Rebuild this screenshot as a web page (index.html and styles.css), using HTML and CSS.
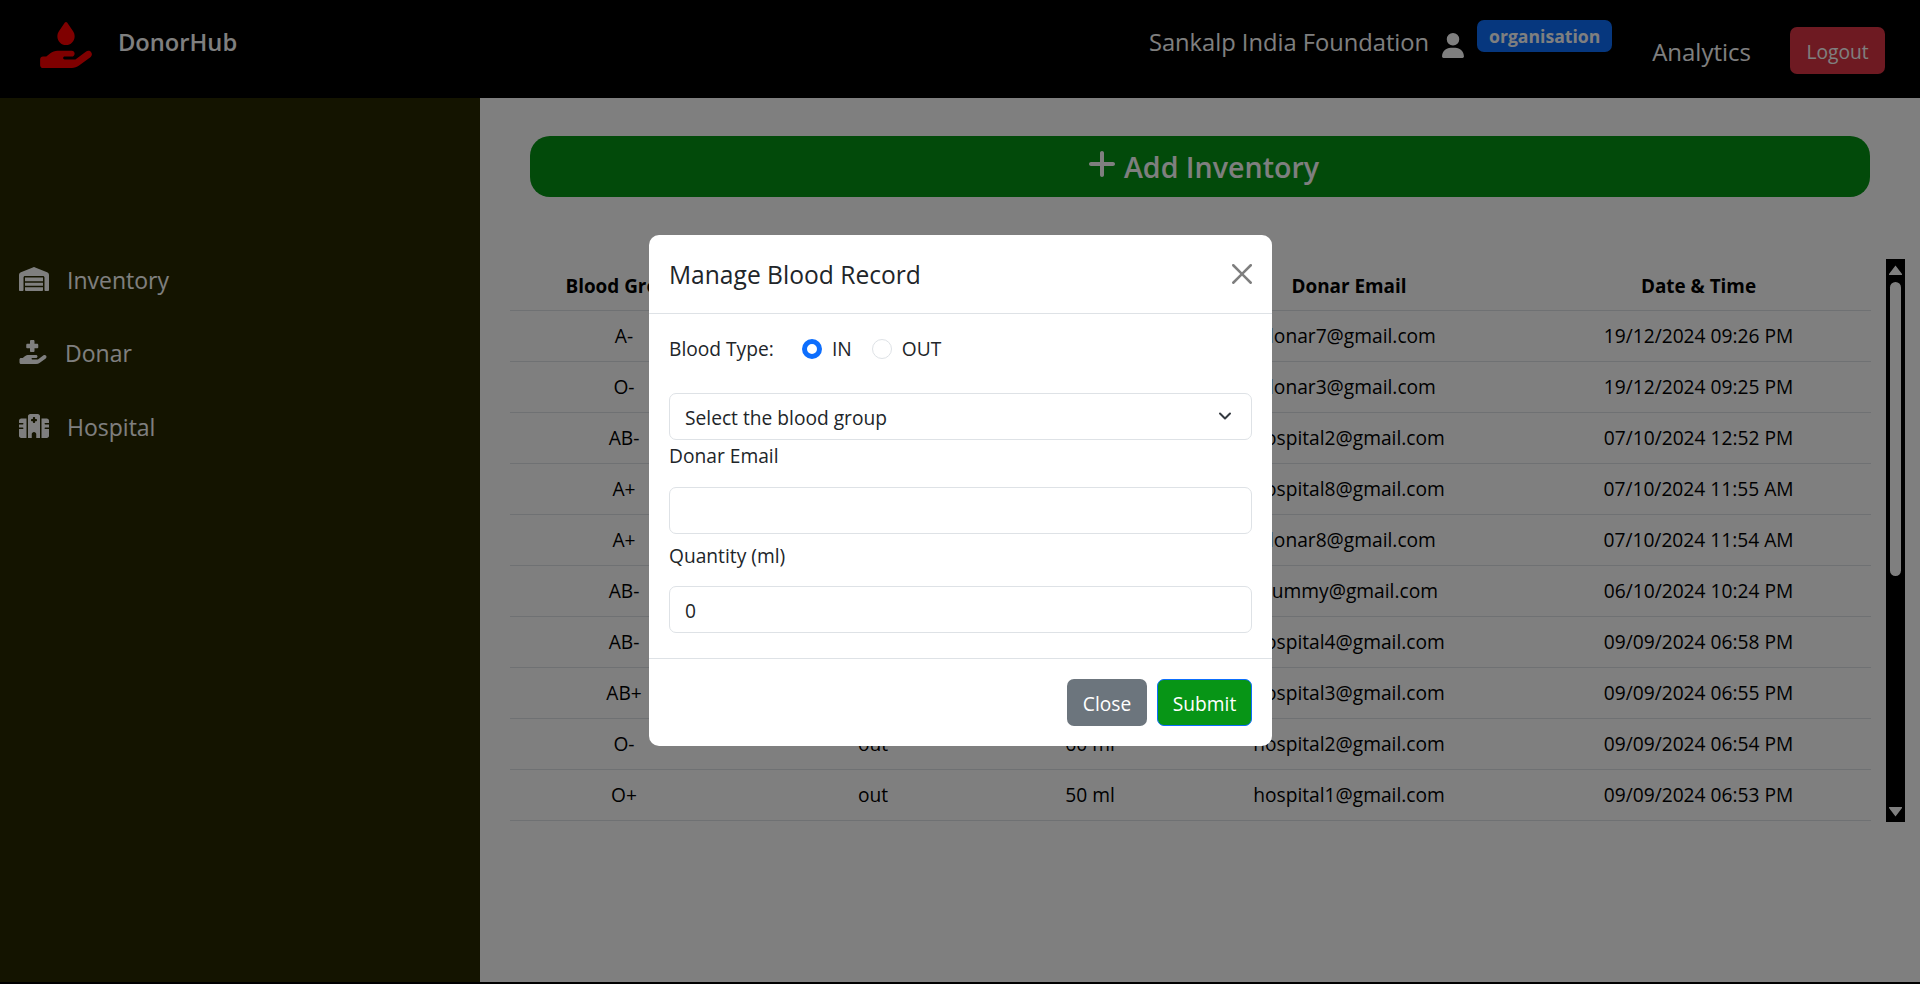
FILE: index.html
```html
<!DOCTYPE html>
<html lang="en">
<head>
  <meta charset="UTF-8" />
  <meta name="viewport" content="width=device-width, initial-scale=1.0"/>
  <title>DonorHub</title>
  <link rel="stylesheet" href="styles.css">
</head>
<body>

  <header class="navbar">
    <div class="brand">
      <svg class="brand-icon" viewBox="0 0 576 512"><path d="M275.5 6.6C278.3 2.5 283 0 288 0s9.7 2.5 12.5 6.6L366.8 103C378 119.3 384 138.6 384 158.3V160c0 53-43 96-96 96s-96-43-96-96v-1.7c0-19.8 6-39 17.2-55.3L275.5 6.6zM568.2 336.3c13.1 17.8 9.3 42.8-8.5 55.9L433.1 485.5c-23.4 17.2-51.6 26.5-80.7 26.5H192 32c-17.7 0-32-14.3-32-32V416c0-17.7 14.3-32 32-32H68.8l44.9-36c22.7-18.2 50.9-28 80-28H272h16 64c17.7 0 32 14.3 32 32s-14.3 32-32 32H288 272c-8.8 0-16 7.2-16 16s7.2 16 16 16H392.6l119.7-88.2c17.8-13.1 42.8-9.3 55.9 8.5z"/></svg>
      <span class="brand-name">DonorHub</span>
    </div>
    <div class="nav-right">
      <span class="org-name">Sankalp India Foundation</span>
      <svg class="user-icon" viewBox="0 0 448 512"><path d="M224 256A128 128 0 1 0 224 0a128 128 0 1 0 0 256zm-45.7 48C79.8 304 0 383.8 0 482.3C0 498.7 13.3 512 29.7 512H418.3c16.4 0 29.7-13.3 29.7-29.7C448 383.8 368.2 304 269.7 304H178.3z"/></svg>
      <span class="badge">organisation</span>
      <a class="nav-link" href="#analytics">Analytics</a>
      <button class="btn btn-logout" type="button">Logout</button>
    </div>
  </header>

  <div class="layout">
    <aside class="sidebar">
      <a class="side-link" href="#inventory">
        <svg class="side-icon" viewBox="0 0 640 512"><path d="M0 488V171.3c0-26.2 15.9-49.7 40.2-59.4L308.1 4.8c7.6-3.1 16.1-3.1 23.8 0L599.8 111.9c24.3 9.7 40.2 33.3 40.2 59.4V488c0 13.3-10.7 24-24 24H568c-13.3 0-24-10.7-24-24V224c0-17.7-14.3-32-32-32H128c-17.7 0-32 14.3-32 32V488c0 13.3-10.7 24-24 24H24c-13.3 0-24-10.7-24-24zm488 24l-336 0c-13.3 0-24-10.7-24-24V432H512l0 56c0 13.3-10.7 24-24 24zM128 400V336H512v64H128zm0-96V224H512l0 80H128z"/></svg>
        Inventory
      </a>
      <a class="side-link" href="#donar">
        <svg class="side-icon" viewBox="0 0 576 512"><path d="M224 24V80H168c-13.3 0-24 10.7-24 24v48c0 13.3 10.7 24 24 24h56v56c0 13.3 10.7 24 24 24h48c13.3 0 24-10.7 24-24V176h56c13.3 0 24-10.7 24-24V104c0-13.3-10.7-24-24-24H320V24c0-13.3-10.7-24-24-24H248c-13.3 0-24 10.7-24 24zM559.7 392.2c17.8-13.1 21.6-38.1 8.5-55.9s-38.1-21.6-55.9-8.5L392.6 416H272c-8.8 0-16-7.2-16-16s7.2-16 16-16h16 64c17.7 0 32-14.3 32-32s-14.3-32-32-32H288 272 193.7c-29.1 0-57.3 9.9-80 28L68.8 384H32c-17.7 0-32 14.3-32 32v64c0 17.7 14.3 32 32 32H192 352.5c29 0 57.3-9.3 80.7-26.5l126.6-93.3z"/></svg>
        Donar
      </a>
      <a class="side-link" href="#hospital">
        <svg class="side-icon" viewBox="0 0 640 512"><path d="M192 48c0-26.5 21.5-48 48-48H400c26.5 0 48 21.5 48 48V512H368V432c0-26.5-21.5-48-48-48s-48 21.5-48 48v80H192V48zM48 96H160V512H48c-26.5 0-48-21.5-48-48V320H80c8.8 0 16-7.2 16-16s-7.2-16-16-16H0V224H80c8.8 0 16-7.2 16-16s-7.2-16-16-16H0V144c0-26.5 21.5-48 48-48zm544 0c26.5 0 48 21.5 48 48v48H560c-8.8 0-16 7.2-16 16s7.2 16 16 16h80v64H560c-8.8 0-16 7.2-16 16s7.2 16 16 16h80V464c0 26.5-21.5 48-48 48H480V96H592zM312 64c-8.8 0-16 7.2-16 16v24H272c-8.8 0-16 7.2-16 16v16c0 8.8 7.2 16 16 16h24v24c0 8.8 7.2 16 16 16h16c8.8 0 16-7.2 16-16V152h24c8.8 0 16-7.2 16-16V120c0-8.8-7.2-16-16-16H344V80c0-8.8-7.2-16-16-16H312z"/></svg>
        Hospital
      </a>
    </aside>

    <main class="content">
      <button class="add-btn" type="button">
        <svg class="plus-icon" viewBox="0 0 448 512"><path d="M256 80c0-17.7-14.3-32-32-32s-32 14.3-32 32V224H48c-17.7 0-32 14.3-32 32s14.3 32 32 32H192V432c0 17.7 14.3 32 32 32s32-14.3 32-32V288H400c17.7 0 32-14.3 32-32s-14.3-32-32-32H256V80z"/></svg>
        Add Inventory
      </button>

      <div class="table-area">
        <table class="records">
          <colgroup>
            <col class="col-group"><col class="col-type"><col class="col-qty"><col class="col-email"><col class="col-date">
          </colgroup>
          <thead>
            <tr><th>Blood Group</th><th>Inventory Type</th><th>Quantity</th><th>Donar Email</th><th>Date &amp; Time</th></tr>
          </thead>
          <tbody>
            <tr><td>A-</td><td>in</td><td>100 ml</td><td>donar7@gmail.com</td><td>19/12/2024 09:26 PM</td></tr>
            <tr><td>O-</td><td>in</td><td>200 ml</td><td>donar3@gmail.com</td><td>19/12/2024 09:25 PM</td></tr>
            <tr><td>AB-</td><td>out</td><td>50 ml</td><td>hospital2@gmail.com</td><td>07/10/2024 12:52 PM</td></tr>
            <tr><td>A+</td><td>out</td><td>100 ml</td><td>hospital8@gmail.com</td><td>07/10/2024 11:55 AM</td></tr>
            <tr><td>A+</td><td>in</td><td>300 ml</td><td>donar8@gmail.com</td><td>07/10/2024 11:54 AM</td></tr>
            <tr><td>AB-</td><td>in</td><td>100 ml</td><td>dummy@gmail.com</td><td>06/10/2024 10:24 PM</td></tr>
            <tr><td>AB-</td><td>out</td><td>40 ml</td><td>hospital4@gmail.com</td><td>09/09/2024 06:58 PM</td></tr>
            <tr><td>AB+</td><td>out</td><td>30 ml</td><td>hospital3@gmail.com</td><td>09/09/2024 06:55 PM</td></tr>
            <tr><td>O-</td><td>out</td><td>60 ml</td><td>hospital2@gmail.com</td><td>09/09/2024 06:54 PM</td></tr>
            <tr><td>O+</td><td>out</td><td>50 ml</td><td>hospital1@gmail.com</td><td>09/09/2024 06:53 PM</td></tr>
          </tbody>
        </table>

        <div class="scrollbar">
          <svg class="scroll-arrow" viewBox="0 0 13 10"><path d="M6.5 0.5 13 9a.6.6 0 0 1-.5 1H.5A.6.6 0 0 1 0 9z"/></svg>
          <div class="scroll-thumb"></div>
          <svg class="scroll-arrow" viewBox="0 0 13 10"><path d="M6.5 9.5 13 1a.6.6 0 0 0-.5-1H.5A.6.6 0 0 0 0 1z"/></svg>
        </div>
      </div>
    </main>
  </div>

  <div class="backdrop"></div>

  <div class="modal">
    <div class="modal-content">
      <div class="modal-header">
        <h5 class="modal-title">Manage Blood Record</h5>
        <button class="btn-close" type="button" aria-label="Close">
          <svg viewBox="0 0 16 16"><path d="M.293.293a1 1 0 0 1 1.414 0L8 6.586 14.293.293a1 1 0 1 1 1.414 1.414L9.414 8l6.293 6.293a1 1 0 0 1-1.414 1.414L8 9.414l-6.293 6.293a1 1 0 0 1-1.414-1.414L6.586 8 .293 1.707a1 1 0 0 1 0-1.414z"/></svg>
        </button>
      </div>
      <div class="modal-body">
        <div class="type-row">
          <span class="type-label">Blood Type:</span>
          <label class="radio"><span class="radio-dot checked"></span>IN</label>
          <label class="radio"><span class="radio-dot"></span>OUT</label>
        </div>
        <div class="field select-field">
          Select the blood group
          <svg class="chevron" viewBox="0 0 16 16"><path fill="none" stroke="#343a40" stroke-linecap="round" stroke-linejoin="round" stroke-width="2" d="m3 5.5 5 5 5-5"/></svg>
        </div>
        <div class="field-label">Donar Email</div>
        <div class="field"></div>
        <div class="field-label field-label-next">Quantity (ml)</div>
        <div class="field">0</div>
      </div>
      <div class="modal-footer">
        <button class="btn btn-close-modal" type="button">Close</button>
        <button class="btn btn-submit" type="button">Submit</button>
      </div>
    </div>
  </div>

</body>
</html>
```

FILE: styles.css
```css
* {
  margin: 0;
  padding: 0;
  box-sizing: border-box;
}

html, body {
  height: 100%;
  overflow: hidden;
}

body {
  background: #000;
  color: #212529;
  font-family: 'Open Sans', 'Noto Sans', sans-serif;
  font-size: 19.2px;
  line-height: 1.5;
}

a {
  color: inherit;
  text-decoration: none;
}

button {
  font-family: inherit;
  border: 0;
}

/* top bar */
.navbar {
  height: 98px;
  background: #000;
  color: #fff;
  display: flex;
  justify-content: space-between;
  padding: 0 35px 0 40px;
}

.brand {
  display: flex;
  align-items: center;
  gap: 26px;
  padding-bottom: 12px;
}

.brand-icon {
  width: 52px;
  height: 46px;
  margin-top: 4px;
  fill: #ff0000;
}

.brand-name {
  font-size: 23.7px;
  font-weight: 600;
}

.nav-right {
  display: flex;
  align-items: flex-start;
}

.org-name {
  font-size: 23.7px;
  margin-top: 25px;
}

.user-icon {
  width: 22px;
  height: 25px;
  margin: 33px 13px 0 13px;
  fill: #fff;
}

.badge {
  margin-top: 20px;
  width: 135px;
  height: 32px;
  border-radius: 7px;
  background: #0d6efd;
  font-size: 17.6px;
  font-weight: 700;
  line-height: 32px;
  text-align: center;
}

.nav-link {
  font-size: 24px;
  margin: 34px 39px 0 40px;
}

.btn {
  height: 47px;
  border-radius: 7px;
  color: #fff;
  font-size: 19.2px;
}

.btn-logout {
  width: 95px;
  margin-top: 27px;
  padding-top: 2px;
  background: #dc3545;
}

/* page body */
.layout {
  display: flex;
  height: 884px;
}

.sidebar {
  width: 480px;
  flex-shrink: 0;
  background: #282900;
  color: #fff;
  padding: 145px 0 0 19px;
}

.side-link {
  height: 73.5px;
  display: flex;
  align-items: center;
  gap: 18px;
  font-size: 23px;
}

.side-icon {
  height: 24px;
  width: 30px;
  fill: #fff;
  margin-top: -2px;
}

.side-link:nth-child(2) .side-icon {
  width: 28px;
}

.content {
  flex: 1;
  min-width: 0;
  background: #fff;
  padding: 38px 15px 0 30px;
}

.add-btn {
  display: flex;
  align-items: center;
  justify-content: center;
  gap: 8px;
  width: 1340px;
  height: 61px;
  margin-left: 20px;
  padding-left: 7px;
  border-radius: 20px;
  background: #049414;
  color: #fff;
  font-size: 28.6px;
  font-weight: 600;
}

.plus-icon {
  width: 28px;
  height: 32px;
  margin-top: -6px;
  fill: #fff;
}

.table-area {
  display: flex;
  justify-content: space-between;
  align-items: flex-start;
  height: 563px;
  margin-top: 62px;
}

.scrollbar {
  width: 19px;
  height: 563px;
  padding: 6px 0 5px;
  display: flex;
  flex-direction: column;
  align-items: center;
  background: #000;
}

.scroll-arrow {
  width: 13px;
  height: 10px;
  flex-shrink: 0;
  fill: #fff;
}

.scroll-thumb {
  width: 11px;
  height: 294px;
  margin: 7px 0 auto;
  border-radius: 6px;
  background: #fff;
}

.records {
  width: 1361px;
  table-layout: fixed;
  border-collapse: collapse;
  text-align: center;
  color: #000;
}

.col-group { width: 228px; }
.col-type { width: 270px; }
.col-qty { width: 164px; }
.col-email { width: 354px; }
.col-date { width: 345px; }

.records th,
.records td {
  height: 51px;
  padding: 2px 10px 0;
  border-bottom: 1px solid #dee2e6;
  font-weight: 400;
  white-space: nowrap;
}

.records th {
  padding-top: 3px;
  font-size: 18.9px;
  font-weight: 700;
}

/* modal */
.backdrop {
  position: fixed;
  left: 0;
  top: 0;
  width: 100%;
  height: 982px;
  background: #000;
  opacity: 0.5;
}

.modal {
  position: fixed;
  left: 649px;
  top: 235px;
  width: 623px;
}

.modal-content {
  background: #fff;
  border-radius: 10px;
}

.modal-header {
  height: 79px;
  display: flex;
  align-items: center;
  justify-content: space-between;
  padding: 0 20px;
  border-bottom: 1px solid #dee2e6;
}

.modal-title {
  padding-top: 2px;
  font-size: 24.6px;
  font-weight: 500;
}

.btn-close {
  width: 20px;
  height: 20px;
  background: none;
  display: flex;
}

.btn-close svg {
  width: 20px;
  height: 20px;
  opacity: 0.5;
}

.modal-body {
  padding: 20px 20px 25px;
}

.type-row {
  display: flex;
  align-items: center;
  height: 30px;
  margin-bottom: 29px;
}

.type-label {
  width: 133px;
  padding-top: 1px;
}

.radio {
  display: flex;
  align-items: center;
  gap: 10px;
  margin-right: 20px;
}

.radio-dot {
  width: 20px;
  height: 20px;
  border: 1px solid #dee2e6;
  border-radius: 50%;
  background: #fff;
}

.radio-dot.checked {
  border: 5px solid #0d6efd;
}

.field {
  height: 47px;
  padding: 0 15px;
  border: 1px solid #dee2e6;
  border-radius: 7px;
  line-height: 47px;
  position: relative;
}

.chevron {
  position: absolute;
  right: 18px;
  top: 14px;
  width: 16px;
  height: 16px;
}

.field-label {
  margin: 2px 0 15px;
  height: 30px;
}

.field-label-next {
  margin: 8px 0 14px;
}

.modal-footer {
  display: flex;
  justify-content: flex-end;
  gap: 10px;
  padding: 20px;
  border-top: 1px solid #dee2e6;
}

.btn-close-modal {
  width: 80px;
  padding-top: 1px;
  background: #6c757d;
}

.btn-submit {
  width: 95px;
  padding-top: 1px;
  background: #079516;
  border: 1px solid #0d6efd;
}
```
